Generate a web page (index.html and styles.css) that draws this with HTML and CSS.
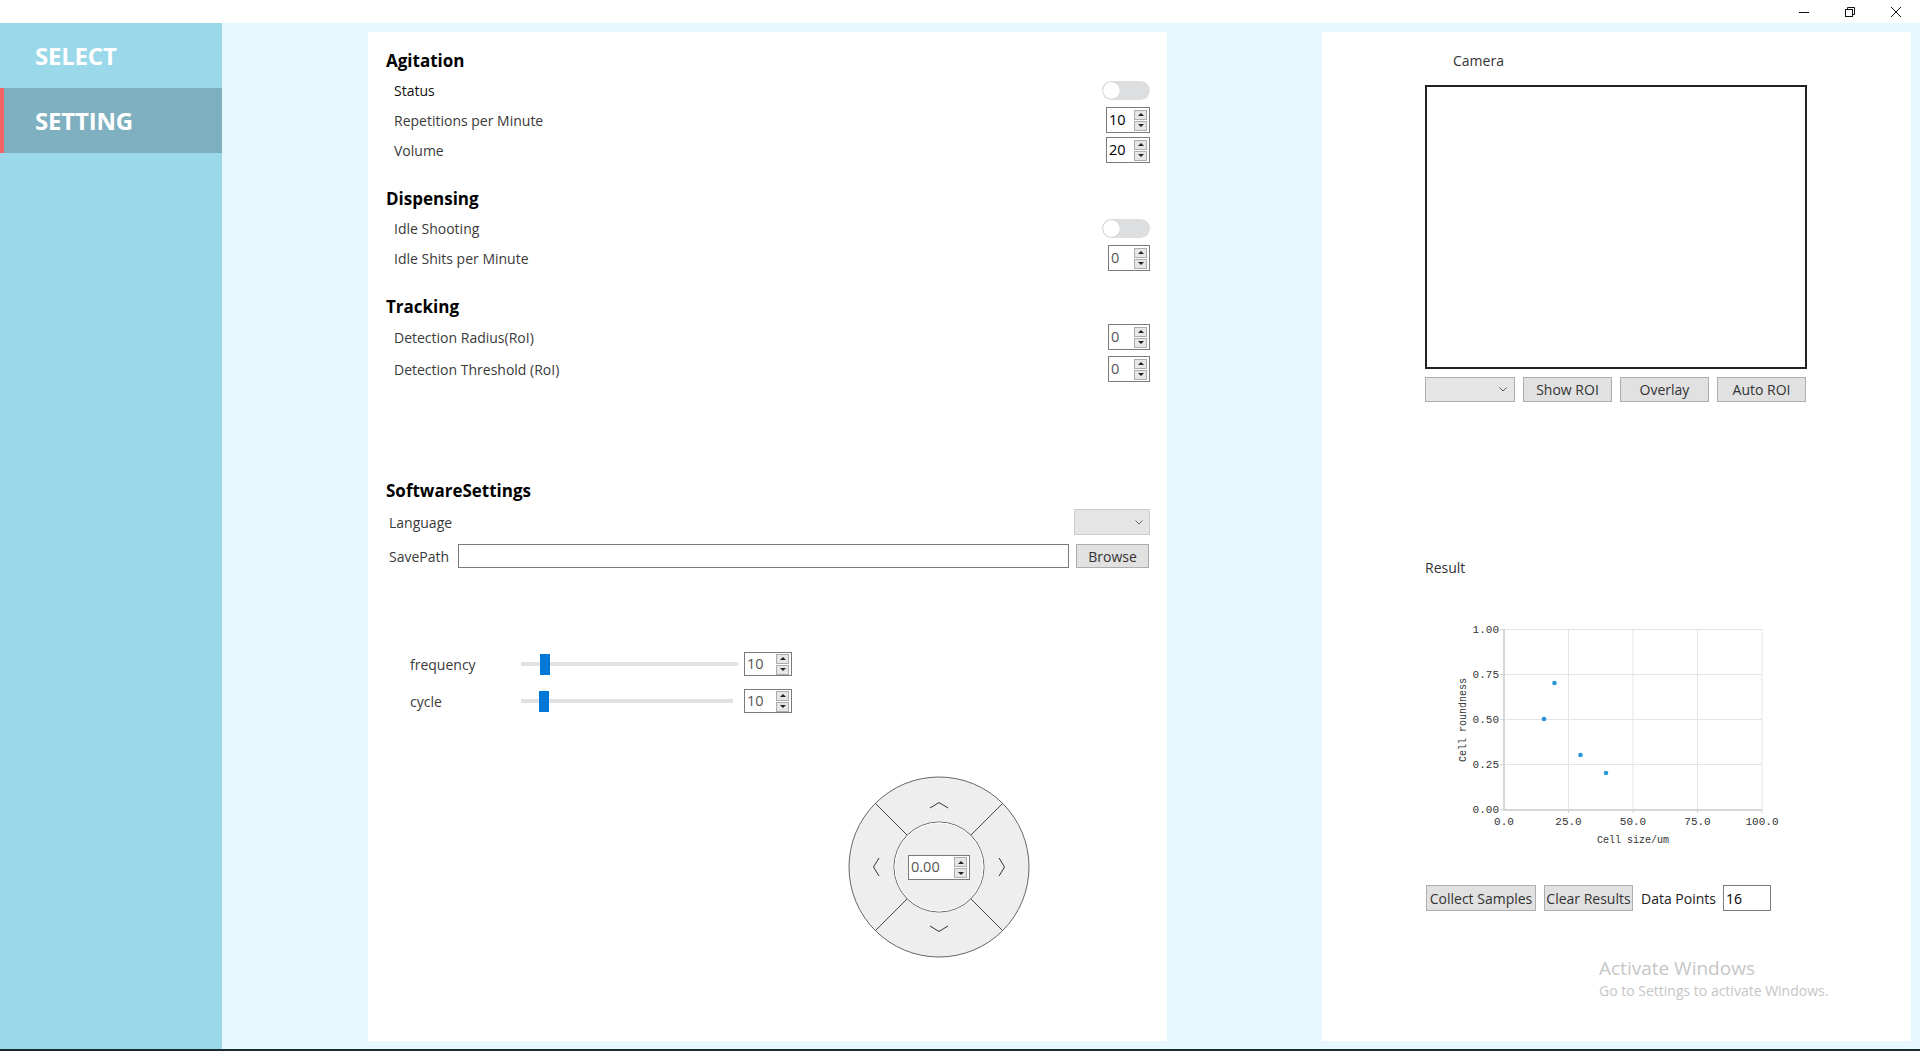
FILE: index.html
```html
<!DOCTYPE html>
<html>
<head>
<meta charset="utf-8">
<title>Settings</title>
<link rel="stylesheet" href="styles.css">
</head>
<body>
<div class="window">
  <header class="titlebar">
    <div class="tb-btn"><svg width="10" height="10" viewBox="0 0 10 10"><line x1="0" y1="5.5" x2="10" y2="5.5" stroke="#111" stroke-width="1"/></svg></div>
    <div class="tb-btn"><svg width="10" height="10" viewBox="0 0 10 10"><rect x="0.5" y="2.5" width="7" height="7" fill="none" stroke="#111"/><path d="M2.5 2.5 V0.5 H9.5 V7.5 H7.5" fill="none" stroke="#111"/></svg></div>
    <div class="tb-btn"><svg width="10" height="10" viewBox="0 0 10 10"><path d="M0 0 L10 10 M10 0 L0 10" stroke="#111" stroke-width="1"/></svg></div>
  </header>

  <div class="main">
    <nav class="sidebar">
      <div class="nav-item">SELECT</div>
      <div class="nav-item active">SETTING</div>
    </nav>

    <div class="content">
      <section class="card settings">
        <div class="group">
          <h2 class="group-title">Agitation</h2>
          <div class="row"><span class="lbl strong">Status</span><span class="toggle"><span class="knob"></span></span></div>
          <div class="row"><span class="lbl">Repetitions per Minute</span>
            <div class="spin w44"><span class="val">10</span><span class="arrows"><i class="up"></i><i class="down"></i></span></div></div>
          <div class="row"><span class="lbl">Volume</span>
            <div class="spin w44"><span class="val">20</span><span class="arrows"><i class="up"></i><i class="down"></i></span></div></div>
        </div>

        <div class="group">
          <h2 class="group-title">Dispensing</h2>
          <div class="row"><span class="lbl">Idle Shooting</span><span class="toggle"><span class="knob"></span></span></div>
          <div class="row"><span class="lbl">Idle Shits per Minute</span>
            <div class="spin w42"><span class="val muted">0</span><span class="arrows"><i class="up"></i><i class="down"></i></span></div></div>
        </div>

        <div class="group loose">
          <h2 class="group-title">Tracking</h2>
          <div class="row"><span class="lbl">Detection Radius(RoI)</span>
            <div class="spin w42"><span class="val muted">0</span><span class="arrows"><i class="up"></i><i class="down"></i></span></div></div>
          <div class="row"><span class="lbl">Detection Threshold (RoI)</span>
            <div class="spin w42"><span class="val muted">0</span><span class="arrows"><i class="up"></i><i class="down"></i></span></div></div>
        </div>

        <div class="software">
          <h2 class="group-title">SoftwareSettings</h2>
          <div class="srow">
            <span class="lbl slbl">Language</span>
            <div class="combo lang"><svg width="8" height="5" viewBox="0 0 8 5"><path d="M0.5 0.5 L4 4 L7.5 0.5" fill="none" stroke="#666"/></svg></div>
          </div>
          <div class="srow">
            <span class="lbl slbl">SavePath</span>
            <div class="path-input"></div>
            <div class="btn browse">Browse</div>
          </div>
        </div>

        <div class="sliders">
          <div class="slrow">
            <span class="lbl sl-lbl">frequency</span>
            <div class="slider"><span class="thumb t1"></span></div>
            <div class="spin w48 h24"><span class="val muted">10</span><span class="arrows"><i class="up"></i><i class="down"></i></span></div>
          </div>
          <div class="slrow">
            <span class="lbl sl-lbl">cycle</span>
            <div class="slider short"><span class="thumb t2"></span></div>
            <div class="spin w48 h24 sp2"><span class="val muted">10</span><span class="arrows"><i class="up"></i><i class="down"></i></span></div>
          </div>
        </div>

        <div class="joystick">
          <svg class="pad" width="182" height="182" viewBox="0 0 182 182">
            <circle cx="91" cy="91" r="90" fill="#eeeeee" stroke="#666" stroke-width="1"/>
            <line x1="122.8" y1="59.2" x2="154.6" y2="27.4" stroke="#333" stroke-width="0.9"/>
            <line x1="59.2" y1="59.2" x2="27.4" y2="27.4" stroke="#333" stroke-width="0.9"/>
            <line x1="122.8" y1="122.8" x2="154.6" y2="154.6" stroke="#333" stroke-width="0.9"/>
            <line x1="59.2" y1="122.8" x2="27.4" y2="154.6" stroke="#333" stroke-width="0.9"/>
            <circle cx="91" cy="91" r="45" fill="#eeeeee" stroke="#666" stroke-width="1"/>
            <circle cx="91" cy="91" r="44" fill="none" stroke="#ffffff" stroke-width="1"/>
            <path d="M82 32 L91 26.5 L100 32" fill="none" stroke="#333" stroke-width="1"/>
            <path d="M82 150 L91 155.5 L100 150" fill="none" stroke="#333" stroke-width="1"/>
            <path d="M31 82 L25.5 91 L31 100" fill="none" stroke="#333" stroke-width="1"/>
            <path d="M151 82 L156.5 91 L151 100" fill="none" stroke="#333" stroke-width="1"/>
          </svg>
          <div class="spin w62 pad-spin"><span class="val muted">0.00</span><span class="arrows"><i class="up"></i><i class="down"></i></span></div>
        </div>
      </section>

      <section class="card vision">
        <div class="cam-title">Camera</div>
        <div class="cam-view"></div>
        <div class="cam-tools">
          <div class="combo cam"><svg width="8" height="5" viewBox="0 0 8 5"><path d="M0.5 0.5 L4 4 L7.5 0.5" fill="none" stroke="#555"/></svg></div>
          <div class="btn cbtn">Show ROI</div>
          <div class="btn cbtn">Overlay</div>
          <div class="btn cbtn">Auto ROI</div>
        </div>

        <div class="result-title">Result</div>
        <svg class="chart" width="350" height="250" viewBox="0 0 350 250">
          <g stroke="#e4e4e4" stroke-width="1">
            <line x1="128.5" y1="29" x2="128.5" y2="209"/>
            <line x1="193" y1="29" x2="193" y2="209"/>
            <line x1="257.5" y1="29" x2="257.5" y2="209"/>
            <line x1="322" y1="29" x2="322" y2="209"/>
            <line x1="64" y1="29.5" x2="322" y2="29.5"/>
            <line x1="64" y1="74.5" x2="322" y2="74.5"/>
            <line x1="64" y1="119.5" x2="322" y2="119.5"/>
            <line x1="64" y1="164.5" x2="322" y2="164.5"/>
          </g>
          <g stroke="#d4d4d4" stroke-width="1">
            <line x1="60" y1="29.5" x2="64" y2="29.5"/>
            <line x1="60" y1="74.5" x2="64" y2="74.5"/>
            <line x1="60" y1="119.5" x2="64" y2="119.5"/>
            <line x1="60" y1="164.5" x2="64" y2="164.5"/>
            <line x1="60" y1="209.5" x2="64" y2="209.5"/>
            <line x1="128.5" y1="209" x2="128.5" y2="213"/>
            <line x1="193" y1="209" x2="193" y2="213"/>
            <line x1="257.5" y1="209" x2="257.5" y2="213"/>
            <line x1="322" y1="209" x2="322" y2="213"/>
          </g>
          <line x1="64" y1="29" x2="64" y2="211" stroke="#d6d6d6" stroke-width="2"/>
          <line x1="63" y1="210" x2="322" y2="210" stroke="#d6d6d6" stroke-width="2"/>
          <g class="tick" text-anchor="end">
            <text x="59" y="33">1.00</text>
            <text x="59" y="78">0.75</text>
            <text x="59" y="123">0.50</text>
            <text x="59" y="168">0.25</text>
            <text x="59" y="213">0.00</text>
          </g>
          <g class="tick" text-anchor="middle">
            <text x="64" y="225">0.0</text>
            <text x="128.5" y="225">25.0</text>
            <text x="193" y="225">50.0</text>
            <text x="257.5" y="225">75.0</text>
            <text x="322" y="225">100.0</text>
          </g>
          <text class="axis-title" x="193" y="243" text-anchor="middle">Cell size/um</text>
          <text class="axis-title" x="0" y="0" text-anchor="middle" transform="translate(26 120) rotate(-90)">Cell roundness</text>
          <g fill="#2b98d6">
            <circle cx="114.5" cy="83" r="2.3"/>
            <circle cx="104" cy="119" r="2.3"/>
            <circle cx="140.5" cy="155" r="2.3"/>
            <circle cx="166" cy="173" r="2.3"/>
          </g>
        </svg>

        <div class="result-tools">
          <div class="btn rbtn collect">Collect Samples</div>
          <div class="btn rbtn clear">Clear Results</div>
          <span class="dp-lbl">Data Points</span>
          <div class="dp-input">16</div>
        </div>
      </section>
    </div>
  </div>
  <div class="taskbar-edge"></div>

  <div class="watermark">
    <div class="wm-title">Activate Windows</div>
    <div class="wm-sub">Go to Settings to activate Windows.</div>
  </div>
</div>
</body>
</html>
```

FILE: styles.css
```css
html, body {
  margin: 0;
  padding: 0;
}

body {
  width: 1920px;
  height: 1051px;
  overflow: hidden;
  font-family: "Open Sans", "Noto Sans", sans-serif;
  background: #e6f7fd;
  color: #333;
}

.window {
  position: relative;
  display: flex;
  flex-direction: column;
  height: 1051px;
}

/* title bar */
.titlebar {
  height: 23px;
  flex: 0 0 23px;
  background: #ffffff;
  display: flex;
  justify-content: flex-end;
  padding-right: 1px;
}

.tb-btn {
  width: 46px;
  display: flex;
  align-items: center;
  justify-content: center;
}

.tb-btn svg {
  display: block;
}

.main {
  flex: 1;
  display: flex;
  min-height: 0;
}

/* sidebar */
.sidebar {
  width: 222px;
  flex: 0 0 222px;
  background: #9bd8ea;
}

.nav-item {
  height: 65px;
  box-sizing: border-box;
  display: flex;
  align-items: center;
  padding-left: 35px;
  color: #ffffff;
  font-weight: 700;
  font-size: 24px;
  letter-spacing: -0.2px;
}

.nav-item.active {
  background: #7eb0bf;
  border-left: 4px solid #f26565;
  padding-left: 31px;
}

/* content */
.content {
  flex: 1;
  display: flex;
  padding: 9px 0 8px 146px;
  gap: 155px;
}

.card {
  background: #ffffff;
  box-sizing: border-box;
}

.settings {
  width: 799px;
  padding: 15px 17px 0 18px;
}

.vision {
  width: 589px;
  padding: 19px 0 0 103px;
}

/* settings groups */
.group-title {
  margin: 0;
  height: 28px;
  line-height: 28px;
  font-size: 17px;
  font-weight: 700;
  color: #000;
}

.group + .group {
  margin-top: 20px;
}

.row {
  height: 30px;
  display: flex;
  align-items: center;
  justify-content: space-between;
  padding-left: 8px;
}

.group.loose .row {
  height: 32px;
}

.lbl {
  font-size: 14px;
  color: #3a3a3a;
}

.lbl.strong {
  color: #111;
}

/* toggle */
.toggle {
  width: 48px;
  height: 19px;
  border-radius: 10px;
  background: #dcdedf;
  display: flex;
  align-items: center;
  padding-left: 1px;
  box-sizing: border-box;
}

.knob {
  width: 17px;
  height: 17px;
  border-radius: 50%;
  background: #ffffff;
  box-shadow: 0 0 1px rgba(0, 0, 0, 0.25);
}

/* spin box */
.spin {
  height: 26px;
  box-sizing: border-box;
  border: 1px solid #7a7a7a;
  background: #fff;
  display: flex;
  align-items: center;
  padding-left: 2px;
}

.spin.w44 { width: 44px; }
.spin.w42 { width: 42px; }
.spin.w48 { width: 48px; }
.spin.w62 { width: 62px; }
.spin.h24 { height: 24px; }

.spin .val {
  flex: 1;
  font-size: 14.5px;
  color: #000;
  line-height: 1;
}

.spin .val.muted {
  color: #555;
}

.arrows {
  width: 13px;
  display: flex;
  flex-direction: column;
  gap: 1px;
  margin-right: 2px;
}

.arrows i {
  height: 10px;
  box-sizing: border-box;
  background: #e6e6e6;
  border: 1px solid #adadad;
  display: flex;
  align-items: center;
  justify-content: center;
}

.arrows i::after {
  content: "";
  width: 0;
  height: 0;
  border-left: 3px solid transparent;
  border-right: 3px solid transparent;
}

.arrows i.up::after {
  border-bottom: 3px solid #222;
}

.arrows i.down::after {
  border-top: 3px solid #222;
}

/* software */
.software {
  margin-top: 92px;
}

.srow {
  height: 34px;
  display: flex;
  align-items: center;
  padding-left: 3px;
}

.slbl {
  width: 66px;
  flex: 0 0 66px;
}

.combo {
  height: 26px;
  box-sizing: border-box;
  background: #e5e5e5;
  border: 1px solid #cccccc;
  display: flex;
  align-items: center;
  justify-content: flex-end;
  padding-right: 6px;
}

.combo.lang {
  width: 76px;
  margin-left: auto;
}

.path-input {
  flex: 1;
  height: 24px;
  box-sizing: border-box;
  border: 1px solid #7a7a7a;
  margin-left: 3px;
  background: #fff;
}

.btn {
  box-sizing: border-box;
  background: #e1e1e1;
  border: 1px solid #adadad;
  font-size: 14px;
  color: #333;
  display: flex;
  align-items: center;
  justify-content: center;
  white-space: nowrap;
}

.browse {
  width: 73px;
  height: 24px;
  margin-left: 7px;
  margin-right: 1px;
}

/* sliders */
.sliders {
  margin-top: 76px;
  display: flex;
  flex-direction: column;
  gap: 7px;
  padding-left: 24px;
}

.slrow {
  height: 30px;
  display: flex;
  align-items: center;
}

.sl-lbl {
  width: 111px;
  flex: 0 0 111px;
}

.slider {
  width: 217px;
  height: 21px;
  display: flex;
  align-items: center;
  background: linear-gradient(#e2e2e2, #e2e2e2) left center / 100% 4px no-repeat;
}

.slider.short {
  background-size: 212px 4px;
}

.thumb {
  width: 10px;
  height: 21px;
  background: #0078d7;
}

.thumb.t1 { margin-left: 19px; }
.thumb.t2 { margin-left: 18px; }

.slrow .spin {
  margin-left: 6px;
}

/* joystick */
.joystick {
  margin-top: 60px;
  margin-left: 462px;
  width: 182px;
  height: 182px;
  display: grid;
}

.joystick .pad,
.joystick .pad-spin {
  grid-area: 1 / 1;
}

.pad {
  display: block;
}

.pad-spin {
  place-self: center;
  height: 25px;
  margin-top: 1px;
}

/* vision card */
.cam-title {
  height: 20px;
  line-height: 20px;
  margin-left: 28px;
  font-size: 14px;
  color: #333;
}

.cam-view {
  margin-top: 14px;
  width: 382px;
  height: 284px;
  box-sizing: border-box;
  border: 2px solid #222;
}

.cam-tools {
  margin-top: 8px;
  display: flex;
  gap: 8px;
  height: 25px;
}

.combo.cam {
  width: 90px;
  height: 25px;
  border-color: #adadad;
  padding-right: 7px;
}

.cbtn {
  width: 89px;
  height: 25px;
}

.result-title {
  margin-top: 156px;
  height: 20px;
  line-height: 20px;
  font-size: 14px;
  color: #333;
}

.chart {
  display: block;
  margin-top: 22px;
  margin-left: 15px;
}

.chart .tick {
  font-family: "Liberation Mono", "DejaVu Sans Mono", monospace;
  font-size: 11px;
  fill: #333;
}

.chart .axis-title {
  font-family: "Liberation Mono", "DejaVu Sans Mono", monospace;
  font-size: 10px;
  fill: #333;
}

.result-tools {
  margin-top: 35px;
  display: flex;
  align-items: center;
  height: 26px;
}

.rbtn {
  height: 26px;
}

.collect {
  width: 110px;
  margin-left: 1px;
}

.clear {
  width: 89px;
  margin-left: 8px;
}

.dp-lbl {
  margin-left: 8px;
  font-size: 14px;
  color: #222;
  width: 75px;
}

.dp-input {
  margin-left: 7px;
  width: 48px;
  height: 26px;
  box-sizing: border-box;
  border: 1px solid #7a7a7a;
  font-size: 14px;
  color: #000;
  padding-left: 2px;
  display: flex;
  align-items: center;
}

.taskbar-edge {
  height: 2px;
  flex: 0 0 2px;
  background: #1d2931;
}

/* windows watermark overlay */
.watermark {
  position: absolute;
  left: 1599px;
  top: 954px;
  color: #c6c6c6;
  pointer-events: none;
}

.wm-title {
  font-size: 19px;
  line-height: 28px;
}

.wm-sub {
  font-size: 14px;
  line-height: 18px;
}
```
